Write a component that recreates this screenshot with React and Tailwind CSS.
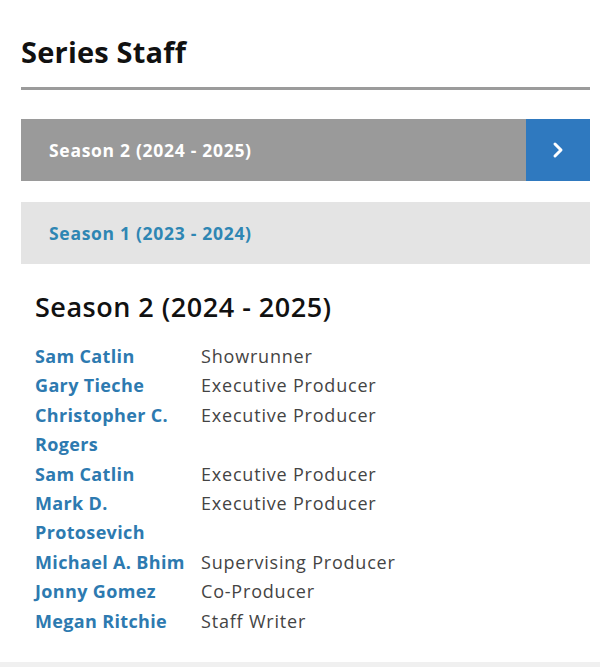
import React from 'react';

const STAFF = [
  { name: 'Sam Catlin', role: 'Showrunner' },
  { name: 'Gary Tieche', role: 'Executive Producer' },
  { name: 'Christopher C. Rogers', role: 'Executive Producer' },
  { name: 'Sam Catlin', role: 'Executive Producer' },
  { name: 'Mark D. Protosevich', role: 'Executive Producer' },
  { name: 'Michael A. Bhim', role: 'Supervising Producer' },
  { name: 'Jonny Gomez', role: 'Co-Producer' },
  { name: 'Megan Ritchie', role: 'Staff Writer' },
];

export default function App() {
  return (
    <div className="w-[600px] h-[667px] bg-white flex flex-col" style={{ fontFamily: '"Open Sans", Lato, sans-serif' }}>
      <div className="flex-1 px-[21px] pr-[10px] pt-[33px]">
        <h2 className="text-[29px] leading-[37px] font-bold text-[#111] tracking-[0.2px]">Series Staff</h2>
        <div className="mt-[17px] h-[3px] bg-[#9b9b9b]" />

        {/* season selector */}
        <div className="mt-[29px] flex h-[62px] bg-[#9a9a9a]">
          <div className="flex-1 flex items-center pl-[28px] text-white font-bold text-[17.5px] tracking-[0.7px]">Season 2 (2024 - 2025)</div>
          <button className="w-[64px] bg-[#2f79bf] flex items-center justify-center text-white">
            <svg width="14" height="18" viewBox="0 0 14 18" fill="none" stroke="white" strokeWidth="3" strokeLinecap="round" strokeLinejoin="round">
              <path d="M4 3l6 6-6 6" />
            </svg>
          </button>
        </div>
        <div className="mt-[21px] h-[62px] bg-[#e4e4e4] flex items-center pl-[28px] text-[#2e86b3] font-bold text-[17.5px] tracking-[0.7px]">
          Season 1 (2023 - 2024)
        </div>

        <div className="pl-[14px] pt-[25px]">
          <h3 className="text-[27px] leading-[36px] font-semibold text-[#111] tracking-[0.5px]">Season 2 (2024 - 2025)</h3>
          <div className="mt-[17px] grid grid-cols-[166px_1fr] text-[18px] leading-[29.4px]">
            {STAFF.map((s, i) => (
              <React.Fragment key={i}>
                <div className="font-bold text-[#2d7ab0] pr-2 tracking-[0.35px]">{s.name}</div>
                <div className="text-[#444] tracking-[0.8px]">{s.role}</div>
              </React.Fragment>
            ))}
          </div>
        </div>
      </div>
      <div className="h-[5px] bg-[#f0f0f0]" />
    </div>
  );
}
